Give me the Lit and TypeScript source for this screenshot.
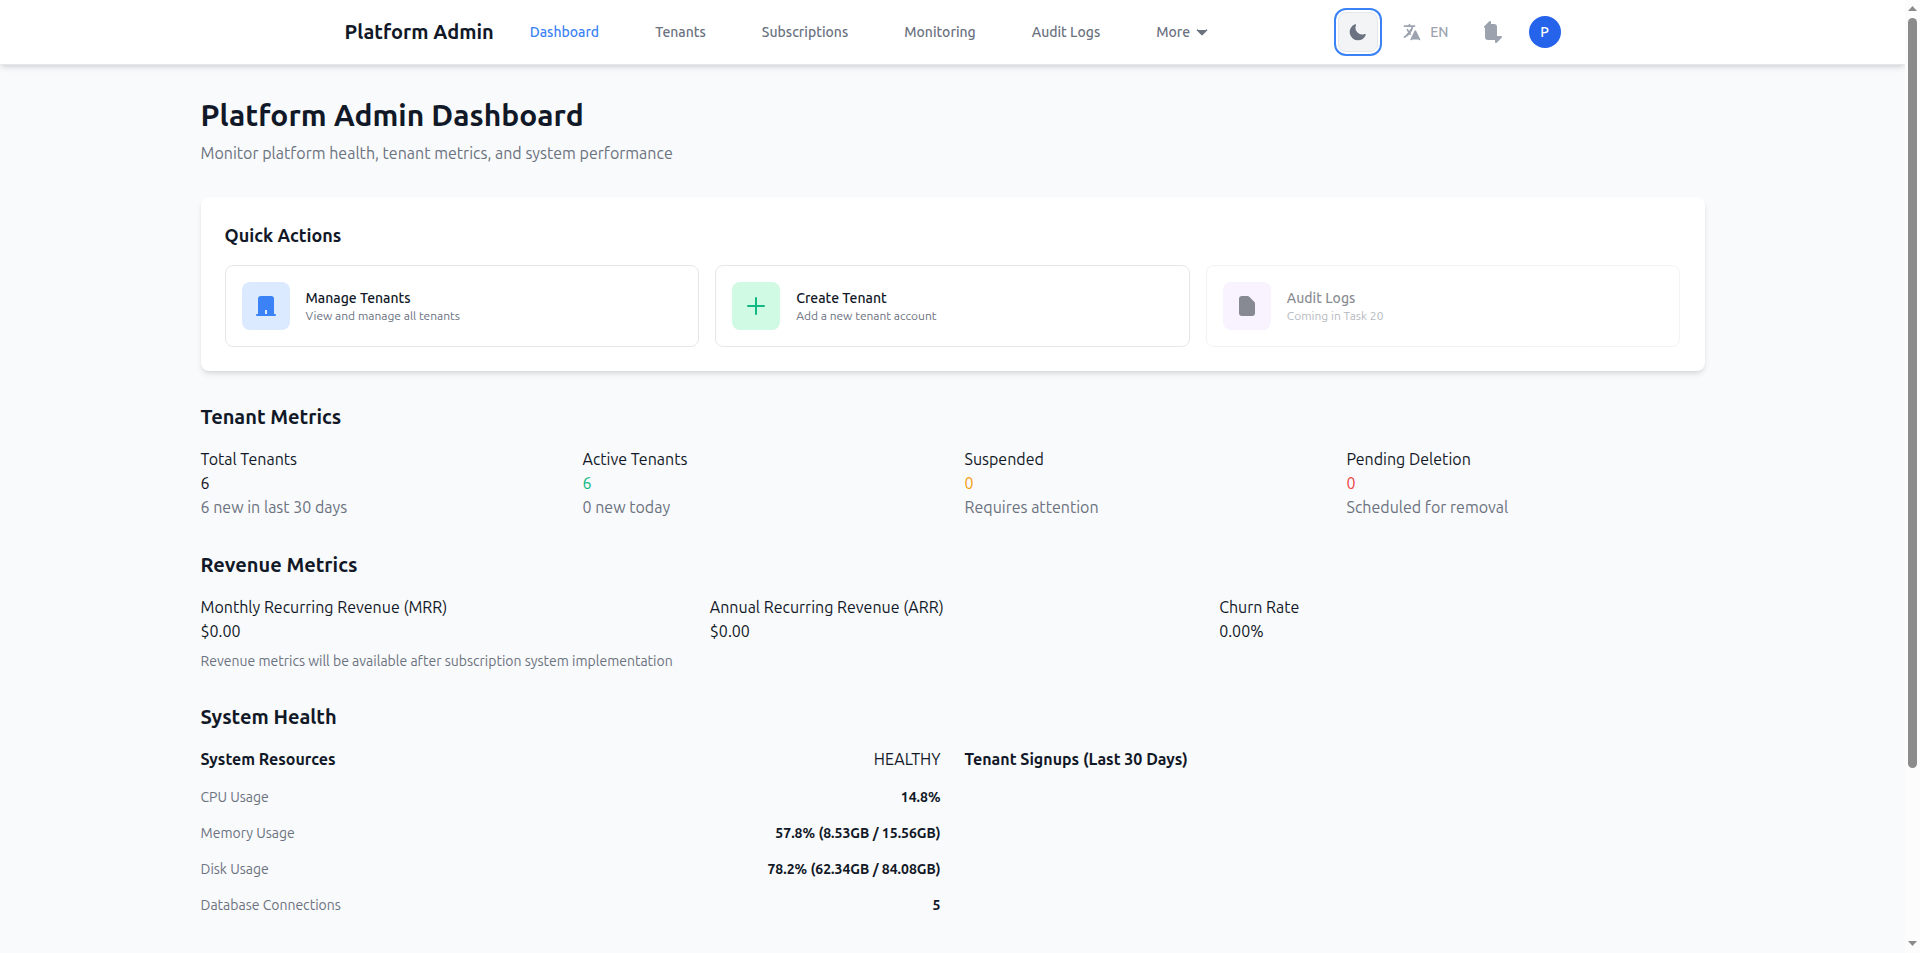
import { LitElement, html, svg, css, nothing } from "lit";
import { customElement, property } from "lit/decorators.js";
import { classMap } from "lit/directives/class-map.js";

const ICONS = {
  building: "M19 21V5a2 2 0 00-2-2H7a2 2 0 00-2 2v16m14 0h2m-2 0h-5m-9 0H3m2 0h5M9 7h1m-1 4h1m4-4h1m-1 4h1m-5 10v-5a1 1 0 011-1h2a1 1 0 011 1v5m-4 0h4",
  plus: "M12 4v16m8-8H4",
  document: "M9 12h6m-6 4h6m2 5H7a2 2 0 01-2-2V5a2 2 0 012-2h5.586a1 1 0 01.707.293l5.414 5.414a1 1 0 01.293.707V19a2 2 0 01-2 2z",
  translate: "M3 5h12M9 3v2m1.048 9.5A18.022 18.022 0 016.412 9m6.088 9h7M11 21l5-10 5 10M12.751 5C11.783 10.77 8.07 15.61 3 18.129",
  alerts: "M15 17h5l-5 5v-5zM9 7H4l5-5v5zM7 5h6a2 2 0 012 2v10a2 2 0 01-2 2H7a2 2 0 01-2-2V7a2 2 0 012-2z",
  chevron: "M19 9l-7 7-7-7",
  moon: "M20.354 15.354A9 9 0 018.646 3.646 9.003 9.003 0 0012 21a9.003 9.003 0 008.354-5.646z",
};

@customElement("ui-icon")
class UiIcon extends LitElement {
  @property() name: keyof typeof ICONS = "plus";
  static styles = css`
    :host { display: block; width: 24px; height: 24px; }
    svg { display: block; width: 100%; height: 100%; fill: currentColor; stroke: currentColor; stroke-width: 2; stroke-linecap: round; stroke-linejoin: round; }
  `;
  render() {
    return html`<svg viewBox="0 0 24 24" aria-hidden="true">${svg`<path d=${ICONS[this.name]}></path>`}</svg>`;
  }
}

@customElement("app-nav")
class AppNav extends LitElement {
  static styles = css`
    :host { display: block; background: #fff; border-bottom: 1px solid #e5e7eb; box-shadow: 0 4px 6px -1px rgb(0 0 0 / 0.1), 0 2px 4px -2px rgb(0 0 0 / 0.1); position: relative; z-index: 1; }
    .bar { box-sizing: border-box; height: 64px; max-width: 1280px; margin: 0 auto; padding: 0 32px; display: flex; align-items: center; justify-content: space-between; }
    .left { display: flex; align-items: center; gap: 24px; }
    .brand { font-size: 20px; line-height: 28px; font-weight: 600; color: #111827; }
    .links { display: flex; align-items: center; gap: 32px; }
    .link { display: flex; align-items: center; gap: 4px; padding: 8px 12px; font-size: 14px; line-height: 20px; font-weight: 500; color: #6b7280; }
    .active { color: #3b82f6; }
    .caret { width: 16px; height: 16px; }
    .right { display: flex; align-items: center; color: #9ca3af; }
    .theme { box-sizing: border-box; width: 40px; height: 40px; display: grid; place-items: center; background: #f3f4f6; border: 1px solid #e5e7eb; border-radius: 8px; box-shadow: 0 0 0 2px #fff, 0 0 0 4px #3b82f6; color: #6b7280; }
    .moon { width: 20px; height: 20px; }
    .lang { display: flex; align-items: center; gap: 8px; margin-left: 24px; font-size: 14px; line-height: 20px; font-weight: 500; }
    .lang ui-icon { width: 20px; height: 20px; }
    .alerts { margin-left: 32px; }
    .avatar { width: 32px; height: 32px; margin-left: 24px; border-radius: 50%; background: #2563eb; color: #fff; display: grid; place-items: center; font-size: 14px; line-height: 20px; font-weight: 500; }
  `;
  render() {
    const links = ["Dashboard", "Tenants", "Subscriptions", "Monitoring", "Audit Logs", "More"];
    return html`<div class="bar">
      <div class="left">
        <span class="brand">Platform Admin</span>
        <nav class="links">
          ${links.map((l, i) => html`<a class=${classMap({ link: true, active: i === 0 })}>${l}${l === "More" ? html`<ui-icon class="caret" name="chevron"></ui-icon>` : nothing}</a>`)}
        </nav>
      </div>
      <div class="right">
        <div class="theme"><ui-icon class="moon" name="moon"></ui-icon></div>
        <div class="lang"><ui-icon name="translate"></ui-icon><span>EN</span></div>
        <ui-icon class="alerts" name="alerts"></ui-icon>
        <div class="avatar">P</div>
      </div>
    </div>`;
  }
}

@customElement("app-root")
class AppRoot extends LitElement {
  static styles = css`
    :host { display: flex; width: 100%; height: 953px; overflow: hidden; background: #f9fafb; color: #111827; font-family: Ubuntu, "Noto Sans", sans-serif; font-size: 16px; line-height: 24px; }
    .page { flex: 1; min-width: 0; overflow: hidden; }
    .scroll { width: 15px; background: #fcfcfc; display: flex; flex-direction: column; align-items: center; justify-content: space-between; padding: 6px 0 7px; box-sizing: border-box; }
    .scroll svg { display: block; width: 9px; height: 5px; fill: #8b8b8b; }
    .thumb { width: 9px; height: 750px; border-radius: 5px; background: #8b8b8b; margin: 7px 0 auto; }
    main { box-sizing: border-box; max-width: 1536px; margin: 0 auto; padding: 32px 16px; display: flex; flex-direction: column; gap: 32px; }
    h1, h2, h3, p { margin: 0; }
    h1 { font-size: 30px; line-height: 36px; font-weight: 600; }
    h2 { font-size: 20px; line-height: 28px; font-weight: 600; margin-bottom: 16px; }
    h3 { font-size: 16px; line-height: 24px; font-weight: 600; }
    .muted { color: #6b7280; }
    .sub { margin-top: 8px; }
    .card { background: #fff; border-radius: 8px; padding: 24px; box-shadow: 0 4px 6px -1px rgb(0 0 0 / 0.1), 0 2px 4px -2px rgb(0 0 0 / 0.1); }
    .card h2 { font-size: 18px; }
    .actions { display: grid; grid-template-columns: repeat(3, 1fr); gap: 16px; }
    .action { display: flex; align-items: center; gap: 16px; padding: 16px; border: 1px solid #e5e7eb; border-radius: 8px; }
    .disabled { opacity: 0.5; }
    .tile { width: 48px; height: 48px; border-radius: 8px; display: grid; place-items: center; }
    .blue { background: #dbeafe; color: #3b82f6; }
    .green { background: #d1fae5; color: #10b981; }
    .purple { background: #f3e8ff; color: #111827; }
    .name { font-size: 14px; line-height: 20px; font-weight: 500; }
    .desc { font-size: 12px; line-height: 16px; color: #6b7280; }
    .grid { display: grid; gap: 24px; }
    .four { grid-template-columns: repeat(4, 1fr); }
    .three { grid-template-columns: repeat(3, 1fr); }
    .two { grid-template-columns: repeat(2, 1fr); }
    .success { color: #10b981; }
    .warning { color: #f59e0b; }
    .danger { color: #ef4444; }
    .note { margin-top: 8px; font-size: 14px; line-height: 20px; color: #6b7280; }
    .row { display: flex; justify-content: space-between; }
    .rows { display: flex; flex-direction: column; gap: 16px; margin-top: 16px; font-size: 14px; line-height: 20px; }
    .value { font-weight: 600; }
  `;
  render() {
    const actions = [
      ["building", "blue", "Manage Tenants", "View and manage all tenants"],
      ["plus", "green", "Create Tenant", "Add a new tenant account"],
      ["document", "purple", "Audit Logs", "Coming in Task 20"],
    ];
    const tenants = [
      ["Total Tenants", "6", "6 new in last 30 days", ""],
      ["Active Tenants", "6", "0 new today", "success"],
      ["Suspended", "0", "Requires attention", "warning"],
      ["Pending Deletion", "0", "Scheduled for removal", "danger"],
    ];
    const revenue = [["Monthly Recurring Revenue (MRR)", "$0.00"], ["Annual Recurring Revenue (ARR)", "$0.00"], ["Churn Rate", "0.00%"]];
    const resources = [["CPU Usage", "14.8%"], ["Memory Usage", "57.8% (8.53GB / 15.56GB)"], ["Disk Usage", "78.2% (62.34GB / 84.08GB)"], ["Database Connections", "5"]];
    return html`
      <div class="page">
        <app-nav></app-nav>
        <main>
          <header><h1>Platform Admin Dashboard</h1><p class="muted sub">Monitor platform health, tenant metrics, and system performance</p></header>
          <section class="card">
            <h2>Quick Actions</h2>
            <div class="actions">
              ${actions.map(([icon, tone, name, desc], i) => html`<div class=${classMap({ action: true, disabled: i === 2 })}>
                <div class="tile ${tone}"><ui-icon name=${icon}></ui-icon></div>
                <div><div class="name">${name}</div><div class="desc">${desc}</div></div>
              </div>`)}
            </div>
          </section>
          <section>
            <h2>Tenant Metrics</h2>
            <div class="grid four">${tenants.map(([l, v, n, tone]) => html`<div><div>${l}</div><div class=${tone}>${v}</div><div class="muted">${n}</div></div>`)}</div>
          </section>
          <section>
            <h2>Revenue Metrics</h2>
            <div class="grid three">${revenue.map(([l, v]) => html`<div><div>${l}</div><div>${v}</div></div>`)}</div>
            <p class="note">Revenue metrics will be available after subscription system implementation</p>
          </section>
          <section>
            <h2>System Health</h2>
            <div class="grid two">
              <div>
                <div class="row"><h3>System Resources</h3><span>HEALTHY</span></div>
                <div class="rows">${resources.map(([l, v]) => html`<div class="row"><span class="muted">${l}</span><span class="value">${v}</span></div>`)}</div>
              </div>
              <div><h3>Tenant Signups (Last 30 Days)</h3></div>
            </div>
          </section>
        </main>
      </div>
      <div class="scroll">
        <svg viewBox="0 0 9 5"><path d="M4.5 0L9 5H0z"/></svg>
        <div class="thumb"></div>
        <svg viewBox="0 0 9 5"><path d="M0 0h9L4.5 5z"/></svg>
      </div>`;
  }
}
